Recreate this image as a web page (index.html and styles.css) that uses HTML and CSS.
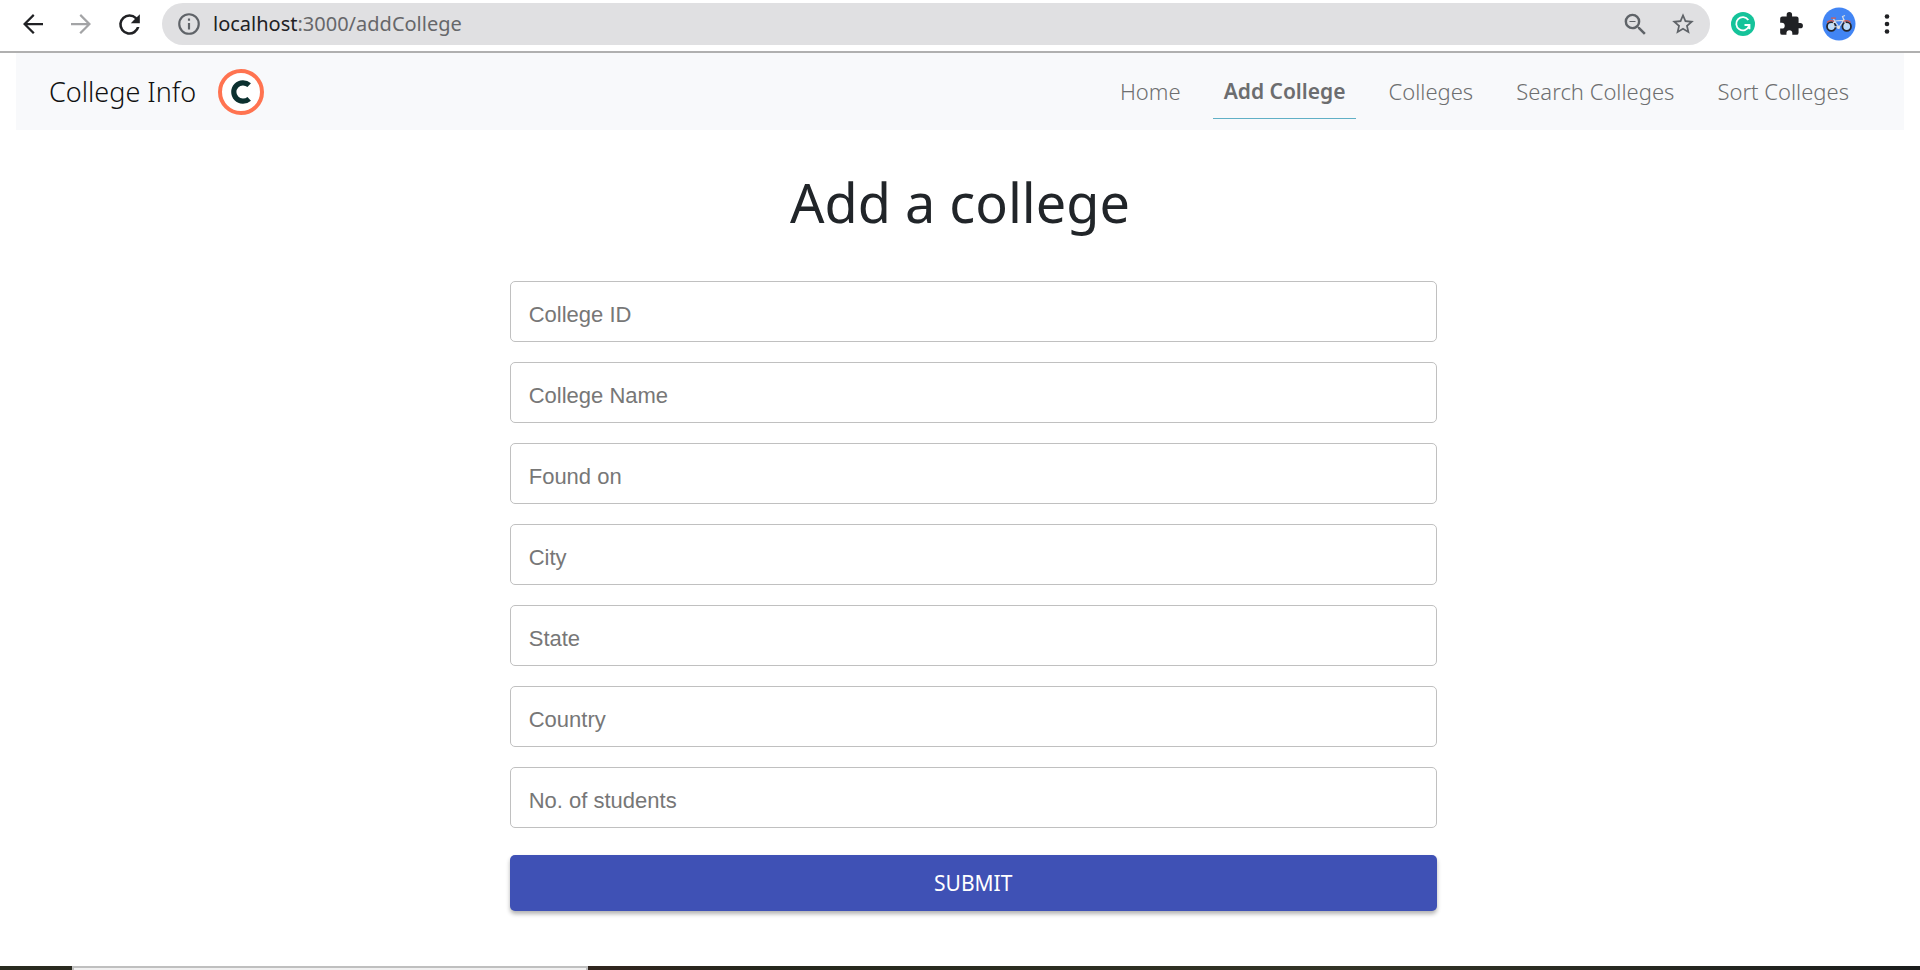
FILE: index.html
```html
<!DOCTYPE html>
<html lang="en">
<head>
<meta charset="utf-8">
<meta name="viewport" content="width=device-width, initial-scale=1">
<title>College Info</title>
<link rel="stylesheet" href="styles.css">
</head>
<body>
<div class="toolbar">
  <button class="tool" type="button" aria-label="Back"><svg width="30" height="30" viewBox="0 0 24 24" fill="#202124"><path d="M20 11.1H7.4l5.8-5.8L12 4l-8 8 8 8 1.3-1.3-5.9-5.8H20z"/></svg></button>
  <button class="tool" type="button" aria-label="Forward"><svg width="30" height="30" viewBox="0 0 24 24" fill="#a3a4a6"><path d="M4 11.1h12.600l-5.800-5.800L12 4l8 8-8 8-1.300-1.300 5.900-5.800H4z"/></svg></button>
  <button class="tool" type="button" aria-label="Reload"><svg width="31" height="31" viewBox="0 0 24 24" fill="#202124"><path d="M17.650 6.350A7.960 7.960 0 0 0 12 4a8 8 0 1 0 7.730 10h-2.080A6 6 0 1 1 12 6c1.660 0 3.140.69 4.220 1.780L13 11h7V4z"/></svg></button>
  <div class="address">
    <svg class="info" width="26" height="26" viewBox="0 0 24 24" fill="#5f6368"><path d="M11 7h2v2h-2zm0 4h2v6h-2zm1-9a10 10 0 1 0 0 20 10 10 0 0 0 0-20zm0 18a8 8 0 1 1 0-16 8 8 0 0 1 0 16z"/></svg>
    <div class="url"><span class="host">localhost</span>:3000/addCollege</div>
    <button class="tool" type="button" aria-label="Zoom"><svg width="29" height="29" viewBox="0 0 24 24" fill="#5f6368"><path d="M15.500 14h-.79l-.28-.27A6.470 6.470 0 0 0 16 9.500 6.500 6.500 0 1 0 9.500 16c1.610 0 3.090-.59 4.230-1.570l.27.28v.79l5 4.990L20.490 19zm-6 0a4.500 4.500 0 1 1 0-9 4.500 4.500 0 0 1 0 9zM7 9h5v1H7z"/></svg></button>
    <button class="tool" type="button" aria-label="Bookmark"><svg width="26" height="26" viewBox="0 0 24 24" fill="#5f6368"><path d="m22 9.240-7.190-.62L12 2 9.190 8.630 2 9.240l5.460 4.730L5.820 21 12 17.270 18.180 21l-1.630-7.030zM12 15.400l-3.760 2.270 1-4.280-3.320-2.880 4.380-.38L12 6.100l1.710 4.040 4.380.38-3.320 2.880 1 4.280z"/></svg></button>
  </div>
  <button class="tool" type="button" aria-label="Writing assistant"><svg width="24" height="24" viewBox="0 0 24 24"><circle cx="12" cy="12" r="12" fill="#15c39a"/><path d="M17.300 8A6.600 6.600 0 1 0 18 14.200M13.500 13h5v4.200" fill="none" stroke="#fff" stroke-width="1.800"/></svg></button>
  <button class="tool" type="button" aria-label="Extensions"><svg width="26" height="26" viewBox="0 0 24 24" fill="#202124"><path d="M20.500 11H19V7a2 2 0 0 0-2-2h-4V3.500a2.500 2.500 0 0 0-5 0V5H4a2 2 0 0 0-1.990 2v3.800H3.500a2.700 2.700 0 0 1 0 5.400H2V20a2 2 0 0 0 2 2h3.800v-1.500a2.700 2.700 0 0 1 5.400 0V22H17a2 2 0 0 0 2-2v-4h1.500a2.500 2.500 0 0 0 0-5z"/></svg></button>
  <button class="tool" type="button" aria-label="Profile"><svg width="34" height="34" viewBox="0 0 34 34"><circle cx="17" cy="17" r="16.500" fill="#4285f4"/><g fill="#b9dcff" stroke="#25262c" stroke-width="1.800"><circle cx="9.300" cy="19.500" r="4.300"/><circle cx="24.700" cy="19.500" r="4.300"/></g><g fill="none" stroke="#d9dde2" stroke-width="1.200"><path d="M9.300 19.500 12.500 14 21.500 13.500 17 20 12.500 14M9.300 19.500 17 20M24.700 19.500 20.500 9.500l2.500-1M12.500 14l-1-2.500"/></g><path d="M9 11.200h5M5 15.500q3-3 7-1M21.500 14.500q4-2 7 1" fill="none" stroke="#d8594e" stroke-width="1.300"/><circle cx="16.500" cy="20.500" r="1.500" fill="#e4e4e4"/></svg></button>
  <button class="tool" type="button" aria-label="Menu"><svg width="24" height="24" viewBox="0 0 24 24" fill="#202124"><circle cx="12" cy="4.500" r="2.300"/><circle cx="12" cy="12" r="2.300"/><circle cx="12" cy="19.500" r="2.300"/></svg></button>
</div>

<header class="navbar">
  <a class="brand" href="#">College Info
    <svg width="46" height="46" viewBox="0 0 46 46" aria-hidden="true"><circle cx="23" cy="23" r="21" fill="#fff" stroke="#ff7350" stroke-width="4"/><path d="M31.200 16.200A9.200 9.200 0 1 0 31.200 29.800" fill="none" stroke="#0b302f" stroke-width="5.200"/></svg>
  </a>
  <nav class="links">
    <a class="link" href="#">Home</a>
    <a class="link active" href="#" aria-current="page">Add College</a>
    <a class="link" href="#">Colleges</a>
    <a class="link" href="#">Search Colleges</a>
    <a class="link" href="#">Sort Colleges</a>
  </nav>
</header>

<main class="content">
  <h1 class="title">Add a college</h1>
  <form class="form">
    <input class="field" type="text" placeholder="College ID" aria-label="College ID">
    <input class="field" type="text" placeholder="College Name" aria-label="College Name">
    <input class="field" type="text" placeholder="Found on" aria-label="Found on">
    <input class="field" type="text" placeholder="City" aria-label="City">
    <input class="field" type="text" placeholder="State" aria-label="State">
    <input class="field" type="text" placeholder="Country" aria-label="Country">
    <input class="field" type="text" placeholder="No. of students" aria-label="No. of students">
    <button class="submit" type="submit">SUBMIT</button>
  </form>
</main>

<div class="taskbar"><div class="search"></div></div>
</body>
</html>
```
FILE: styles.css
```css
* {
  box-sizing: border-box;
}

body {
  margin: 0;
  min-height: 100vh;
  display: flex;
  flex-direction: column;
  background: #fff;
  color: #212529;
  font-family: "Noto Sans", "Open Sans", sans-serif;
}

.toolbar {
  display: flex;
  align-items: center;
  padding: 3px 9px 6px;
  border-bottom: 2px solid #b0b0b0;
}

.tool {
  display: flex;
  align-items: center;
  justify-content: center;
  flex: none;
  width: 48px;
  height: 42px;
  padding: 0;
  border: 0;
  background: none;
}

.address {
  display: flex;
  flex: 1;
  align-items: center;
  margin: 0 9px;
  padding: 0 3px 0 14px;
  border-radius: 21px;
  background: #e0e0e2;
}

.info {
  flex: none;
}

.url {
  flex: 1;
  padding-left: 11px;
  color: #66676a;
  font-size: 20px;
  line-height: 42px;
}

.host {
  color: #202124;
}

.navbar {
  display: flex;
  align-items: center;
  justify-content: space-between;
  margin: 0 16px;
  padding: 11px 44px 11px 33px;
  background: #f8f9fb;
}

.brand {
  display: flex;
  align-items: center;
  gap: 22px;
  color: #111;
  font-size: 27px;
  font-weight: 300;
  line-height: 36px;
  text-decoration: none;
}

.links {
  display: flex;
  gap: 21px;
}

.link {
  padding: 11px 11px 10px;
  border-bottom: 1px solid transparent;
  color: #6e6f70;
  font-size: 22px;
  font-weight: 300;
  line-height: 33px;
  text-decoration: none;
}

.active {
  border-bottom-color: #61b0c6;
  color: #6c6d6f;
  font-size: 21px;
  font-weight: 600;
}

.content {
  flex: 1;
  padding: 40px 16px;
}

.title {
  margin: 0 0 46px;
  font-size: 54px;
  font-weight: 400;
  line-height: 65px;
  text-align: center;
}

.form {
  display: flex;
  flex-direction: column;
  gap: 20px;
  width: 49.1%;
  margin-left: 26.150%;
}

.field {
  width: 100%;
  height: 61px;
  padding: 6px 18px 0;
  border: 1px solid #c0c0c0;
  border-radius: 5px;
  background: #fff;
  color: #212529;
  font-family: "Liberation Sans", Arial, sans-serif;
  font-size: 22px;
}

.field::placeholder {
  color: #777;
  opacity: 1;
}

.submit {
  height: 56px;
  margin-top: 7px;
  border: 0;
  border-radius: 5px;
  background: #3f51b5;
  box-shadow: 0 3px 4px rgba(0, 0, 0, 0.3);
  color: #fff;
  font-family: inherit;
  font-size: 21px;
}

.taskbar {
  height: 4px;
  padding-left: 72px;
  background: linear-gradient(90deg, #292b20, #30251e 32%, #25271c 40%, #333426 70%, #1b1d1c);
}

.search {
  width: 27.9%;
  height: 4px;
  border: 2px solid #bfbfbf;
  border-bottom: 0;
  background: #f1f1f1;
}
```
